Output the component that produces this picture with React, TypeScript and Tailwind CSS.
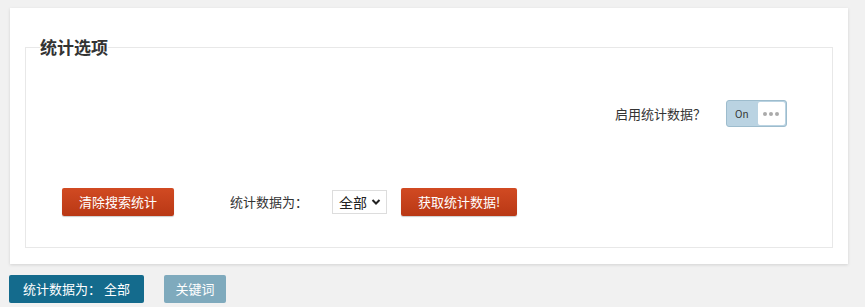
import React from "react";

const font = { fontFamily: '"Noto Sans CJK SC", "Noto Sans", sans-serif' };

export default function App() {
  return (
    <div className="w-[865px] h-[307px] bg-[#f1f1f1] overflow-hidden text-[#333]" style={font}>
      <div className="pt-[8px] pl-[10px]">
        <div className="w-[838px] h-[256px] bg-white shadow-[0_1px_3px_rgba(0,0,0,0.13)] pt-[29px] px-[15px]">
          <fieldset className="border border-[#e8e8e8] h-[211px] px-[14px]">
            <legend className="px-0 text-[17px] font-bold leading-[20px] text-[#333]">统计选项</legend>
            <div className="flex items-center justify-end pr-[31px] mt-[43px] h-[27px]">
              <span className="text-[13px] mr-[20px]">启用统计数据？</span>
              <div className="w-[61px] h-[27px] rounded-[3px] bg-[#bad3e2] border border-[#9dbccd] flex items-center pl-[8px] pr-[1px]">
                <span className="text-[10px] text-[#333] w-[23px]">On</span>
                <div className="w-[28px] h-[23px] bg-white rounded-[2px] flex items-center justify-center gap-[2px] ml-auto">
                  <span className="w-[4px] h-[4px] rounded-full bg-[#aaa]" />
                  <span className="w-[4px] h-[4px] rounded-full bg-[#aaa]" />
                  <span className="w-[4px] h-[4px] rounded-full bg-[#aaa]" />
                </div>
              </div>
            </div>
            <div className="flex items-center mt-[61px] pl-[22px]">
              <button className="w-[112px] h-[28px] rounded-[2px] bg-gradient-to-b from-[#d14a22] to-[#b93815] text-white text-[13px] shadow-[0_1px_1px_rgba(0,0,0,0.2)]">
                清除搜索统计
              </button>
              <span className="ml-[56px] text-[13px]">统计数据为：</span>
              <div className="ml-[24px] w-[55px] h-[24px] border border-[#ddd] flex items-center pl-[6px] text-[14px] text-[#222]">
                全部
                <svg width="10" height="8" viewBox="0 0 10 8" className="ml-[4px]">
                  <path d="M1.5 2 L5 5.5 L8.5 2" stroke="#222" strokeWidth="2" fill="none" />
                </svg>
              </div>
              <button className="ml-[14px] w-[116px] h-[28px] rounded-[2px] bg-gradient-to-b from-[#d14a22] to-[#b93815] text-white text-[13px] shadow-[0_1px_1px_rgba(0,0,0,0.2)]">
                获取统计数据!
              </button>
            </div>
          </fieldset>
        </div>
      </div>
      <div className="flex items-center pl-[9px] mt-[11px] gap-[20px]">
        <div className="w-[135px] h-[28px] rounded-[2px] bg-[#146b8d] text-white text-[13px] flex items-center justify-center">
          统计数据为：&nbsp;全部
        </div>
        <div className="w-[62px] h-[28px] rounded-[2px] bg-[#7faabd] text-white text-[13px] flex items-center justify-center">
          关键词
        </div>
      </div>
    </div>
  );
}
